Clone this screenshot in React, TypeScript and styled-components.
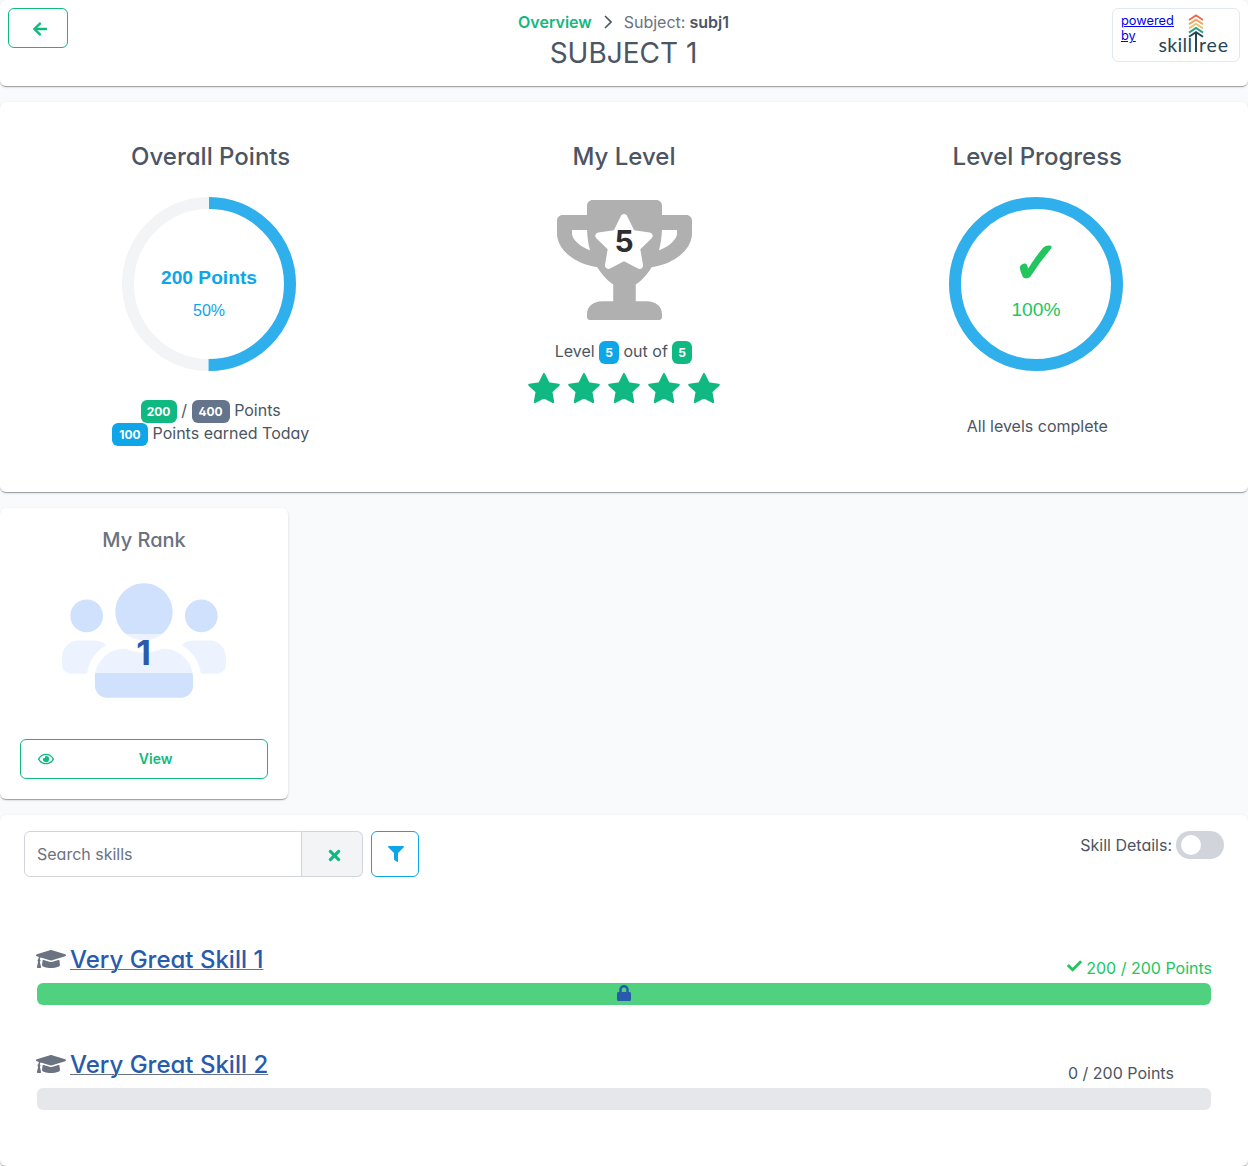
import React from 'react';
import styled, { createGlobalStyle } from 'styled-components';
import {
  FaArrowLeft,
  FaCheck,
  FaFilter,
  FaGraduationCap,
  FaLock,
  FaRegEye,
  FaStar,
  FaTimes,
  FaTrophy,
  FaUsers,
} from 'react-icons/fa';

const GREEN = '#10b981';
const BLUE = '#0ea5e9';

const GlobalStyle = createGlobalStyle`
  *, *::before, *::after { box-sizing: border-box; }
  body {
    margin: 0;
    background: #f8fafc;
    color: #4b5563;
    font-family: Inter, sans-serif;
    font-size: 16px;
    font-feature-settings: 'cv02', 'cv03', 'cv04', 'cv11';
  }
`;

const Page = styled.main`
  display: flex;
  flex-direction: column;
  gap: 16px;
  height: 1166px;
  overflow: hidden;
`;

const Card = styled.section`
  flex: none;
  background: #fff;
  border-radius: 6px;
  box-shadow: 0 2px 1px -1px rgba(0, 0, 0, 0.2), 0 1px 1px 0 rgba(0, 0, 0, 0.14),
    0 1px 3px 0 rgba(0, 0, 0, 0.12);
`;

const HeaderCard = styled(Card)`
  display: grid;
  grid-template-columns: 128px 1fr 128px;
  align-items: start;
  height: 86px;
  padding: 8px;
`;

const OutlineButton = styled.button<{ $w: string; $h: number; $color?: string }>`
  display: flex;
  align-items: center;
  justify-content: center;
  flex: none;
  width: ${(p) => p.$w};
  height: ${(p) => p.$h}px;
  padding: 0;
  color: ${(p) => p.$color ?? GREEN};
  background: #fff;
  border: 1px solid currentColor;
  border-radius: 6px;
  font: inherit;
`;

const BackIcon = styled(FaArrowLeft)`
  margin: 2px 0 0 4px;
  font-size: 16px;
`;

const Heading = styled.div`
  display: flex;
  flex-direction: column;
  align-items: center;
`;

const Crumbs = styled.nav`
  display: flex;
  align-items: center;
  height: 28px;
  padding-right: 1px;
  color: #6b7280;
`;

const CrumbLink = styled.span`
  color: ${GREEN};
  font-weight: 600;
`;

const CrumbChevron = styled.svg`
  margin: 0 12px;
`;

const CrumbName = styled.b`
  margin-left: 4px;
  color: #4b5563;
  font-weight: 600;
`;

const PageTitle = styled.h1`
  margin: 0;
  padding-right: 1px;
  font-size: 28px;
  line-height: 34px;
  font-weight: 400;
`;

const Powered = styled.div`
  display: flex;
  height: 54px;
  padding: 4px 8px;
  border: 1px solid #e2e8f0;
  border-radius: 6px;
`;

const PoweredLink = styled.a`
  width: 37px;
  color: #0000ee;
  font-size: 12.8px;
  line-height: 15px;
  text-decoration: underline;
`;

const Logo = styled.svg`
  flex: none;
`;

const StatsCard = styled(Card)`
  display: grid;
  grid-template-columns: repeat(3, 1fr);
  height: 390px;
  padding: 40px 4px 0;
`;

const Stat = styled.div`
  display: flex;
  flex-direction: column;
  align-items: center;
`;

const StatTitle = styled.h2`
  margin: 0 0 26px;
  font-size: 24px;
  line-height: 29px;
  font-weight: 500;
`;

const Ring = styled.svg`
  display: block;
  flex: none;
  margin: 0 3px 29px 0;
`;

const RingText = styled.text`
  font-family: 'Liberation Sans', Arial, sans-serif;
  text-anchor: middle;
`;

const Line = styled.div<{ $top?: number }>`
  display: flex;
  align-items: center;
  gap: 4.6px;
  height: 23px;
  margin-top: ${(p) => p.$top ?? 0}px;
  white-space: pre;
`;

const Badge = styled.span<{ $bg: string; $w?: number }>`
  display: inline-flex;
  align-items: center;
  justify-content: center;
  flex: none;
  width: ${(p) => p.$w ?? 20}px;
  height: 23px;
  margin-top: 4px;
  color: #fff;
  background: ${(p) => p.$bg};
  border-radius: 6px;
  font-size: 12px;
  font-weight: 700;
`;

const LevelLine = styled(Line)`
  gap: 4.4px;
  padding-right: 1px;
`;

const TrophyBox = styled.div`
  display: grid;
  place-items: center;
  margin: 3px 0 19px;
  height: 120px;

  & > * { grid-area: 1 / 1; }
`;

const TrophyShape = styled(FaTrophy)`
  width: 135px;
  height: 120px;
  margin-left: 1px;
  color: #b0b0b0;
`;

const TrophyStar = styled(FaStar)`
  width: 62px;
  height: 55px;
  margin-bottom: 38px;
  color: #fff;
`;

const TrophyLevel = styled.span`
  margin-bottom: 38px;
  color: #2e2e2e;
  font-size: 30px;
  font-weight: 700;
`;

const Stars = styled.div`
  display: flex;
  gap: 8px;
  margin-top: 10px;
`;

const RankCard = styled(Card)`
  display: flex;
  flex-direction: column;
  align-items: center;
  width: 288px;
  height: 291px;
  padding: 20px;
`;

const RankTitle = styled.h3`
  margin: 0 0 23px;
  color: #6b7280;
  font-size: 20px;
  line-height: 24px;
  font-weight: 500;
`;

const RankArt = styled.div`
  display: grid;
  align-items: center;
  justify-items: center;
  width: 100%;
  height: 131px;
  margin-bottom: 33px;

  & > * { grid-area: 1 / 1; }
`;

const UsersShape = styled(FaUsers)`
  width: 164px;
  height: 131px;
  margin-bottom: 1px;
  color: #d0e1fd;
`;

const RankValue = styled.div`
  width: 100%;
  height: 39px;
  margin-top: 25px;
  padding-right: 1px;
  color: #295bac;
  background: rgba(255, 255, 255, 0.6);
  font-size: 34px;
  line-height: 38px;
  font-weight: 700;
  text-align: center;
`;

const EyeIcon = styled(FaRegEye)`
  margin-left: 17.3px;
  font-size: 16px;
`;

const ButtonLabel = styled.span`
  flex: 1;
  padding: 0 10px 2px 0;
  font-size: 14px;
  font-weight: 600;
`;

const SkillsCard = styled(Card)`
  height: 351px;
  padding: 16px 24px;
`;

const Toolbar = styled.div`
  display: flex;
  align-items: flex-start;
  height: 46px;
`;

const SearchInput = styled.input`
  width: 278px;
  height: 46px;
  padding: 0 12px;
  border: 1px solid #d1d5db;
  border-radius: 6px 0 0 6px;
  outline: none;
  background: #fff;
  font: inherit;
  font-feature-settings: inherit;

  &::placeholder { color: #6b7280; opacity: 1; }
`;

const ClearButton = styled.button`
  display: flex;
  align-items: center;
  justify-content: center;
  width: 61px;
  height: 46px;
  margin-right: 8px;
  padding: 2px 0 0 4px;
  color: ${GREEN};
  background: #f3f4f6;
  border: 1px solid #d1d5db;
  border-left: 0;
  border-radius: 0 6px 6px 0;
  font-size: 17px;
`;

const FilterIcon = styled(FaFilter)`
  margin-left: 1px;
`;

const Details = styled.label`
  display: flex;
  align-items: center;
  gap: 4px;
  margin-left: auto;
`;

const Switch = styled.span`
  display: flex;
  align-items: center;
  width: 48px;
  height: 28px;
  padding-left: 5px;
  background: #d1d5db;
  border-radius: 14px;

  &::before {
    content: '';
    width: 20px;
    height: 20px;
    background: #fff;
    border-radius: 50%;
  }
`;

const SkillList = styled.div`
  display: flex;
  flex-direction: column;
  gap: 45px;
  padding: 68px 12px 0;
`;

const SkillHead = styled.div`
  display: flex;
  align-items: flex-start;
  height: 38px;
`;

const SkillIcon = styled(FaGraduationCap)`
  width: 30px;
  height: 24px;
  margin: 2px 4px 0 0;
  color: #6b7280;
`;

const SkillName = styled.a`
  flex: 1;
  color: #295bac;
  font-size: 24px;
  line-height: 29px;
  font-weight: 500;

  span {
    text-decoration: underline;
    text-decoration-color: #6b7280;
    text-decoration-thickness: 1px;
  }
`;

const SkillPoints = styled.div<{ $done: boolean }>`
  display: flex;
  gap: 4.5px;
  width: ${(p) => (p.$done ? 145.2 : 144)}px;
  margin-top: 13px;
  color: ${(p) => (p.$done ? '#22c55e' : '#4b5563')};
  line-height: 20px;
  white-space: nowrap;
`;

const Bar = styled.div<{ $done: boolean }>`
  display: flex;
  align-items: center;
  justify-content: center;
  height: 22px;
  margin: 0 1px;
  padding-bottom: 2px;
  color: #295bac;
  background: ${(p) => (p.$done ? '#4fd17f' : '#e5e7eb')};
  border-radius: 6px;
`;

const skills = [
  { name: 'Very Great Skill 1', earned: 200, total: 200 },
  { name: 'Very Great Skill 2', earned: 0, total: 200 },
];

function SkillTreeLogo() {
  const tiers = [
    { y: 7, color: '#e76f51' },
    { y: 11.2, color: '#f4a261' },
    { y: 15.4, color: '#e9c46a' },
    { y: 19.6, color: '#2a9d8f' },
    { y: 23.8, color: '#264653' },
  ];
  return (
    <Logo width="72" height="46" viewBox="0 0 72 46">
      <g fill="none" strokeWidth="1.9">
        {tiers.map((t) => (
          <path key={t.y} stroke={t.color} d={`M31 ${t.y}L38 ${t.y - 4.6}L45 ${t.y}`} />
        ))}
        <path stroke="#264653" strokeWidth="2" d="M38 19.4V39" />
      </g>
      <g fill="#264653" fontFamily="Lato, sans-serif" fontSize="19.5">
        <text x="0.5" y="38.7" textLength="33.6" lengthAdjust="spacing">skill</text>
        <text x="41" y="38.7" textLength="29" lengthAdjust="spacing">ree</text>
      </g>
    </Logo>
  );
}

function RatingStar() {
  return (
    <svg width="32" height="32" viewBox="0 0 14 14" fill={GREEN} stroke={GREEN} strokeLinejoin="round">
      <path d="M7 1L8.95 4.95L13.4 5.6L10.2 8.65L10.95 13.1L7 11.05L3.05 13.1L3.8 8.65L.6 5.6L5.05 4.95Z" />
    </svg>
  );
}

function ProgressRing({ percent, children }: { percent: number; children: React.ReactNode }) {
  const length = 2 * Math.PI * 81;
  return (
    <Ring width="174" height="174" viewBox="0 0 174 174">
      <g fill="none" strokeWidth="12">
        <circle cx="87" cy="87" r="81" stroke="#f3f4f6" />
        <circle
          cx="87"
          cy="87"
          r="81"
          stroke="#2fafeb"
          strokeDasharray={`${(length * percent) / 100} ${length}`}
          transform="rotate(-90 87 87)"
        />
      </g>
      {children}
    </Ring>
  );
}

export default function App() {
  return (
    <>
      <GlobalStyle />
      <Page>
        <HeaderCard as="header">
          <OutlineButton $w="60px" $h={40} aria-label="Back">
            <BackIcon />
          </OutlineButton>
          <Heading>
            <Crumbs>
              <CrumbLink>Overview</CrumbLink>
              <CrumbChevron width="8" height="14" viewBox="0 0 8 14" fill="none" stroke="#4b5563" strokeWidth="1.6">
                <path d="M1 1L7 7L1 13" />
              </CrumbChevron>
              Subject: <CrumbName>subj1</CrumbName>
            </Crumbs>
            <PageTitle>SUBJECT 1</PageTitle>
          </Heading>
          <Powered>
            <PoweredLink>powered by</PoweredLink>
            <SkillTreeLogo />
          </Powered>
        </HeaderCard>

        <StatsCard>
          <Stat>
            <StatTitle>Overall Points</StatTitle>
            <ProgressRing percent={50}>
              <RingText x="87" y="87" fontSize="19.2" fontWeight="700" fill={BLUE}>200 Points</RingText>
              <RingText x="87" y="119" fontSize="16" fill={BLUE}>50%</RingText>
            </ProgressRing>
            <Line $top={-2}>
              <Badge $bg={GREEN} $w={36}>200</Badge>/<Badge $bg="#64748b" $w={38}>400</Badge>Points
            </Line>
            <Line>
              <Badge $bg={BLUE} $w={36}>100</Badge>Points earned Today
            </Line>
          </Stat>
          <Stat>
            <StatTitle>My Level</StatTitle>
            <TrophyBox>
              <TrophyShape />
              <TrophyStar />
              <TrophyLevel>5</TrophyLevel>
            </TrophyBox>
            <LevelLine>
              Level<Badge $bg={BLUE}>5</Badge>out of<Badge $bg={GREEN}>5</Badge>
            </LevelLine>
            <Stars>
              {[1, 2, 3, 4, 5].map((n) => (
                <RatingStar key={n} />
              ))}
            </Stars>
          </Stat>
          <Stat>
            <StatTitle>Level Progress</StatTitle>
            <ProgressRing percent={100}>
              <RingText x="87.7" y="86" fontSize="57.6" fontWeight="700" fill="#22c55e">✓</RingText>
              <RingText x="87" y="119" fontSize="19.2" fill="#22c55e">100%</RingText>
            </ProgressRing>
            <Line $top={14}>All levels complete</Line>
          </Stat>
        </StatsCard>

        <RankCard>
          <RankTitle>My Rank</RankTitle>
          <RankArt>
            <UsersShape />
            <RankValue>1</RankValue>
          </RankArt>
          <OutlineButton $w="100%" $h={40}>
            <EyeIcon />
            <ButtonLabel>View</ButtonLabel>
          </OutlineButton>
        </RankCard>

        <SkillsCard>
          <Toolbar>
            <SearchInput placeholder="Search skills" />
            <ClearButton aria-label="Clear">
              <FaTimes />
            </ClearButton>
            <OutlineButton $w="48px" $h={46} $color={BLUE} aria-label="Filter">
              <FilterIcon />
            </OutlineButton>
            <Details>
              Skill Details:
              <Switch />
            </Details>
          </Toolbar>
          <SkillList>
            {skills.map((s) => {
              const done = s.earned === s.total;
              return (
                <div key={s.name}>
                  <SkillHead>
                    <SkillIcon />
                    <SkillName>
                      <span>{s.name}</span>
                    </SkillName>
                    <SkillPoints $done={done}>
                      {done && <FaCheck />}
                      {`${s.earned} / ${s.total} Points`}
                    </SkillPoints>
                  </SkillHead>
                  <Bar $done={done}>{done && <FaLock />}</Bar>
                </div>
              );
            })}
          </SkillList>
        </SkillsCard>
      </Page>
    </>
  );
}
